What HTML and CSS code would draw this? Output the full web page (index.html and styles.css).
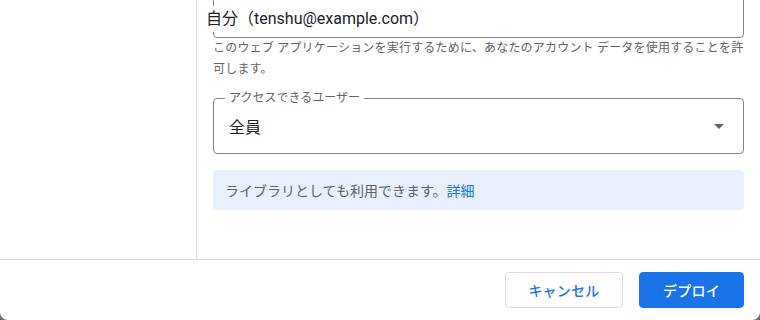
FILE: index.html
```html
<!DOCTYPE html>
<html lang="ja">
<head>
<meta charset="utf-8">
<link rel="stylesheet" href="styles.css">
</head>
<body>
<div class="dialog">
  <div class="main">
    <div class="sidebar"></div>
    <div class="content">
      <div class="field field-exec">
        <span class="field-value">自分（tenshu@example.com）</span>
      </div>
      <p class="helper">このウェブ アプリケーションを実行するために、あなたのアカウント データを使用することを許可します。</p>
      <div class="select">
        <span class="select-label">アクセスできるユーザー</span>
        <span class="select-value">全員</span>
        <span class="select-arrow"></span>
      </div>
      <div class="info">ライブラリとしても利用できます。<a class="info-link" href="#">詳細</a></div>
    </div>
  </div>
  <div class="footer">
    <button class="btn btn-outline">キャンセル</button>
    <button class="btn btn-primary">デプロイ</button>
  </div>
</div>
</body>
</html>
```

FILE: styles.css
```css
* { box-sizing: border-box; }
html, body {
  margin: 0;
  height: 100%;
}
body {
  background: #6b6e72;
  font-family: Roboto, "Noto Sans CJK JP", sans-serif;
  color: #202124;
  overflow: hidden;
}
.dialog {
  width: 760px;
  height: 320px;
  background: #fff;
  border-radius: 0 0 8px 8px;
  display: flex;
  flex-direction: column;
  overflow: hidden;
}
.main {
  flex: 1;
  display: flex;
  min-height: 0;
  border-bottom: 1px solid #dadce0;
}
.sidebar {
  width: 197px;
  border-right: 1px solid #dadce0;
}
.content {
  flex: 1;
  padding: 0 16px 0 16px;
  overflow: hidden;
}
.field {
  margin-top: -18px;
  height: 56px;
  border: 1px solid #80868b;
  border-radius: 4px;
  display: flex;
  align-items: flex-end;
  padding-bottom: 5px;
}
.field-value {
  margin-left: -8px;
  background: #fff;
  font-size: 16px;
  line-height: 26px;
  color: #202124;
}
.helper {
  margin: 0;
  font-size: 12px;
  line-height: 21px;
  letter-spacing: 0.2px;
  color: #5f6368;
}
.select {
  position: relative;
  margin-top: 18px;
  height: 56px;
  border: 1px solid #80868b;
  border-radius: 4px;
  display: flex;
  align-items: center;
  padding: 0 16px 0 15px;
}
.select-label {
  position: absolute;
  top: -9px;
  left: 11px;
  padding: 0 4px;
  background: #fff;
  font-size: 12px;
  line-height: 16px;
  color: #5f6368;
}
.select-value {
  flex: 1;
  font-size: 16px;
  color: #202124;
}
.select-arrow {
  width: 0;
  height: 0;
  border-left: 5px solid transparent;
  border-right: 5px solid transparent;
  border-top: 5px solid #5f6368;
  margin-right: 3px;
}
.info {
  margin-top: 16px;
  height: 40px;
  background: #e8f0fe;
  border-radius: 4px;
  padding: 0 12px;
  display: flex;
  align-items: center;
  font-size: 14px;
  color: #5f6368;
}
.info-link {
  color: #1a73e8;
  text-decoration: none;
}
.footer {
  height: 60px;
  display: flex;
  justify-content: flex-end;
  align-items: flex-start;
  gap: 16px;
  padding: 12px 16px 0 0;
}
.btn {
  height: 36px;
  border-radius: 4px;
  font-family: Roboto, "Noto Sans CJK JP", sans-serif;
  font-size: 14px;
  font-weight: 500;
  letter-spacing: 0.25px;
  cursor: pointer;
}
.btn-outline {
  width: 118px;
  background: #fff;
  border: 1px solid #dadce0;
  color: #1a73e8;
}
.btn-primary {
  width: 105px;
  background: #1a73e8;
  border: 1px solid #1a73e8;
  color: #fff;
}
```
